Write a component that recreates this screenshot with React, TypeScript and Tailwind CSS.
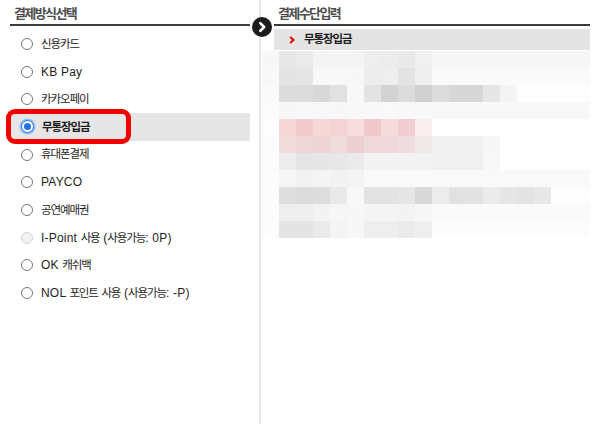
import type { ReactNode } from "react";

// Hangul runs get their own span so they can be set tighter than the Latin text.
const HANGUL = /([\uac00-\ud7a3]+)/;

function Ko({ text, className }: { text: string; className: string }) {
  return (
    <>
      {text.split(HANGUL).map((part, i) =>
        i % 2 === 1 ? (
          <span key={i} className={className}>
            {part}
          </span>
        ) : (
          part
        )
      )}
    </>
  );
}

type Method = { label: string; state?: "checked" | "disabled" };

const methods: Method[] = [
  { label: "신용카드" },
  { label: "KB Pay" },
  { label: "카카오페이" },
  { label: "무통장입금", state: "checked" },
  { label: "휴대폰결제" },
  { label: "PAYCO" },
  { label: "공연예매권" },
  { label: "I-Point 사용 (사용가능: 0P)", state: "disabled" },
  { label: "OK 캐쉬백" },
  { label: "NOL 포인트 사용 (사용가능: -P)" },
];

// Pixelated account details block: each row is a list of 17px cells plus a fill for the rest.
const mosaic: { cells: string[]; tail: string }[] = [
  { cells: ["#f7f7f7", "#e8e8e8", "#eaeaea", "#f4f4f4", "#f5f5f5", "#f4f4f4", "#eeeeee", "#ececec", "#e9e9e9", "#f0f0f0"], tail: "#f6f6f6" },
  { cells: ["#f8f8f8", "#e4e4e4", "#e6e6e6", "#f8f8f8", "#f8f8f8", "#f7f7f7", "#ededed", "#eeeeee", "#e3e3e3", "#efefef"], tail: "#fafafa" },
  { cells: ["#fafafa", "#dcdcdc", "#dcdcdc", "#d8d8d8", "#e1e1e1", "#f8f8f8", "#e3e3e3", "#d3d3d3", "#dcdcdc", "#d0d0d0", "#dcdcdc", "#d7d7d7", "#d7d7d7", "#e6e6e6", "#f4f4f4"], tail: "#fdfdfd" },
  { cells: ["#fbfbfb", "#f7f7f7", "#f8f8f8", "#f8f8f8", "#f7f7f7", "#f8f8f8", "#f8f8f8", "#f9f9f9", "#f8f8f8", "#f8f8f8"], tail: "#f8f8f8" },
  { cells: ["#fdfdfd", "#f5d6d7", "#f2cbcd", "#f5d7d8", "#f4d3d5", "#f7dddd", "#f2c9cb", "#f6dbdb", "#f2ced2", "#fbeeee"], tail: "#ffffff" },
  { cells: ["#fbfbfb", "#f1dcdd", "#efd7d9", "#eed4d6", "#f0dcdd", "#edd0d4", "#efd8da", "#efd8db", "#efdcde", "#f1e9e9", "#f1f1f1", "#f1f1f1", "#f1f1f1", "#f7f7f7"], tail: "#ffffff" },
  { cells: ["#fbfbfb", "#ececec", "#e5e5e5", "#e6e6e6", "#e7e7e7", "#eaeaea", "#f3f3f3", "#f3f3f3", "#f2f2f2", "#f2f2f2", "#f0f0f0", "#f0f0f0", "#f0f0f0", "#f8f8f8"], tail: "#ffffff" },
  { cells: ["#fcfcfc", "#f6f6f6", "#f3f3f3", "#f5f5f5", "#f2f2f2", "#f4f4f4"], tail: "#f9f9f9" },
  { cells: ["#fcfcfc", "#dedede", "#dbdbdb", "#dddddd", "#e9e9e9", "#f8f8f8", "#e3e3e3", "#e3e3e3", "#e6e6e6", "#d8d8d8", "#ececec", "#e1e1e1", "#e2e2e2", "#ebebeb", "#e6e6e6", "#e3e3e3", "#e8e8e8"], tail: "#fdfdfd" },
  { cells: ["#fcfcfc", "#eeeeee", "#eeeeee", "#f3f3f3", "#f6f6f6", "#f7f7f7", "#f4f4f4", "#f4f4f4", "#f3f3f3", "#f6f6f6"], tail: "#fafafa" },
  { cells: ["#fcfcfc", "#e4e4e4", "#e4e4e4", "#eaeaea", "#f4f4f4", "#f7f7f7", "#eeeeee", "#eeeeee", "#eaeaea", "#efefef"], tail: "#fcfcfc" },
];

function Radio({ state }: { state?: Method["state"] }) {
  if (state === "checked") {
    return (
      <span className="flex h-[13px] w-[13px] items-center justify-center rounded-full border-[1.5px] border-[#2771e6] bg-white ring-[1.5px] ring-[#94bef4]">
        <span className="h-[7px] w-[7px] rounded-full bg-[#2771e6]" />
      </span>
    );
  }
  if (state === "disabled") {
    return <span className="h-[12px] w-[12px] rounded-full border border-[#d6d6d6] bg-[#f1f1f1]" />;
  }
  return <span className="h-[12px] w-[12px] rounded-full border border-[#777777] bg-white" />;
}

function SectionTitle({ children, className }: { children: ReactNode; className?: string }) {
  return (
    <h2
      className={`h-[26px] border-b-2 border-[#3d3d3d] pl-[4px] pt-[4px] text-[13px] leading-[20px] font-bold text-[#4d4d4d] ${className ?? ""}`}
    >
      {children}
    </h2>
  );
}

export default function App() {
  return (
    <div className="flex h-[424px] w-[600px] bg-white font-['Liberation_Sans','Noto_Sans_CJK_KR',sans-serif] text-[#1e1e1e]">
      {/* payment method list */}
      <section className="w-[259px] shrink-0 pl-[10px] pr-[9px]">
        <SectionTitle>
          <Ko text="결제방식선택" className="tracking-[-1.6px]" />
        </SectionTitle>
        <ul className="mt-[4px]">
          {methods.map((m) => {
            const checked = m.state === "checked";
            return (
              <li
                key={m.label}
                className={`relative flex h-[27.7px] items-center gap-[8px] pl-[11px] text-[12px] tracking-[0.2px] ${
                  checked ? "bg-[#e6e6e6] font-bold" : ""
                }`}
              >
                <Radio state={m.state} />
                <span className="whitespace-nowrap">
                  <Ko text={m.label} className="text-[11.5px] tracking-[-1.1px]" />
                </span>
                {checked && (
                  <span className="pointer-events-none absolute left-[-4px] top-[-4px] h-[35px] w-[125px] rounded-[9px] border-[5px] border-[#f00000]" />
                )}
              </li>
            );
          })}
        </ul>
      </section>

      {/* divider with step arrow */}
      <div className="relative w-[2px] shrink-0 bg-[#e8e8e8]">
        <svg
          viewBox="0 0 20 20"
          className="absolute left-[-7px] top-[17px] h-[20px] w-[20px]"
        >
          <circle cx="10" cy="10" r="10" fill="#1c1c1c" />
          <path
            d="M8.3 6.2 L12.1 10 L8.3 13.8"
            fill="none"
            stroke="#ffffff"
            strokeWidth="2.6"
            strokeLinecap="round"
            strokeLinejoin="round"
          />
        </svg>
      </div>

      {/* payment details */}
      <section className="w-[331px] shrink-0">
        <SectionTitle className="ml-[13px] w-[316px]">
          <Ko text="결제수단입력" className="tracking-[-1.6px]" />
        </SectionTitle>
        <div className="ml-[13px] mt-[3px] flex h-[21px] w-[316px] items-center gap-[9px] bg-[#e4e4e4] pl-[15px] text-[12px] font-bold">
          <svg viewBox="0 0 6 8" className="h-[8px] w-[6px]">
            <path d="M1.2 1 L4.6 4 L1.2 7" fill="none" stroke="#e00000" strokeWidth="2" />
          </svg>
          <span>
            <Ko text="무통장입금" className="text-[11.5px] tracking-[-1.1px]" />
          </span>
        </div>
        <div className="ml-[1px] mt-[1px] w-[328px]">
          {mosaic.map((row, r) => (
            <div key={r} className="flex h-[17px]">
              {row.cells.map((c, i) => (
                <div key={i} className="h-[17px] w-[17px] shrink-0" style={{ backgroundColor: c }} />
              ))}
              <div className="h-[17px] flex-1" style={{ backgroundColor: row.tail }} />
            </div>
          ))}
        </div>
      </section>
    </div>
  );
}
